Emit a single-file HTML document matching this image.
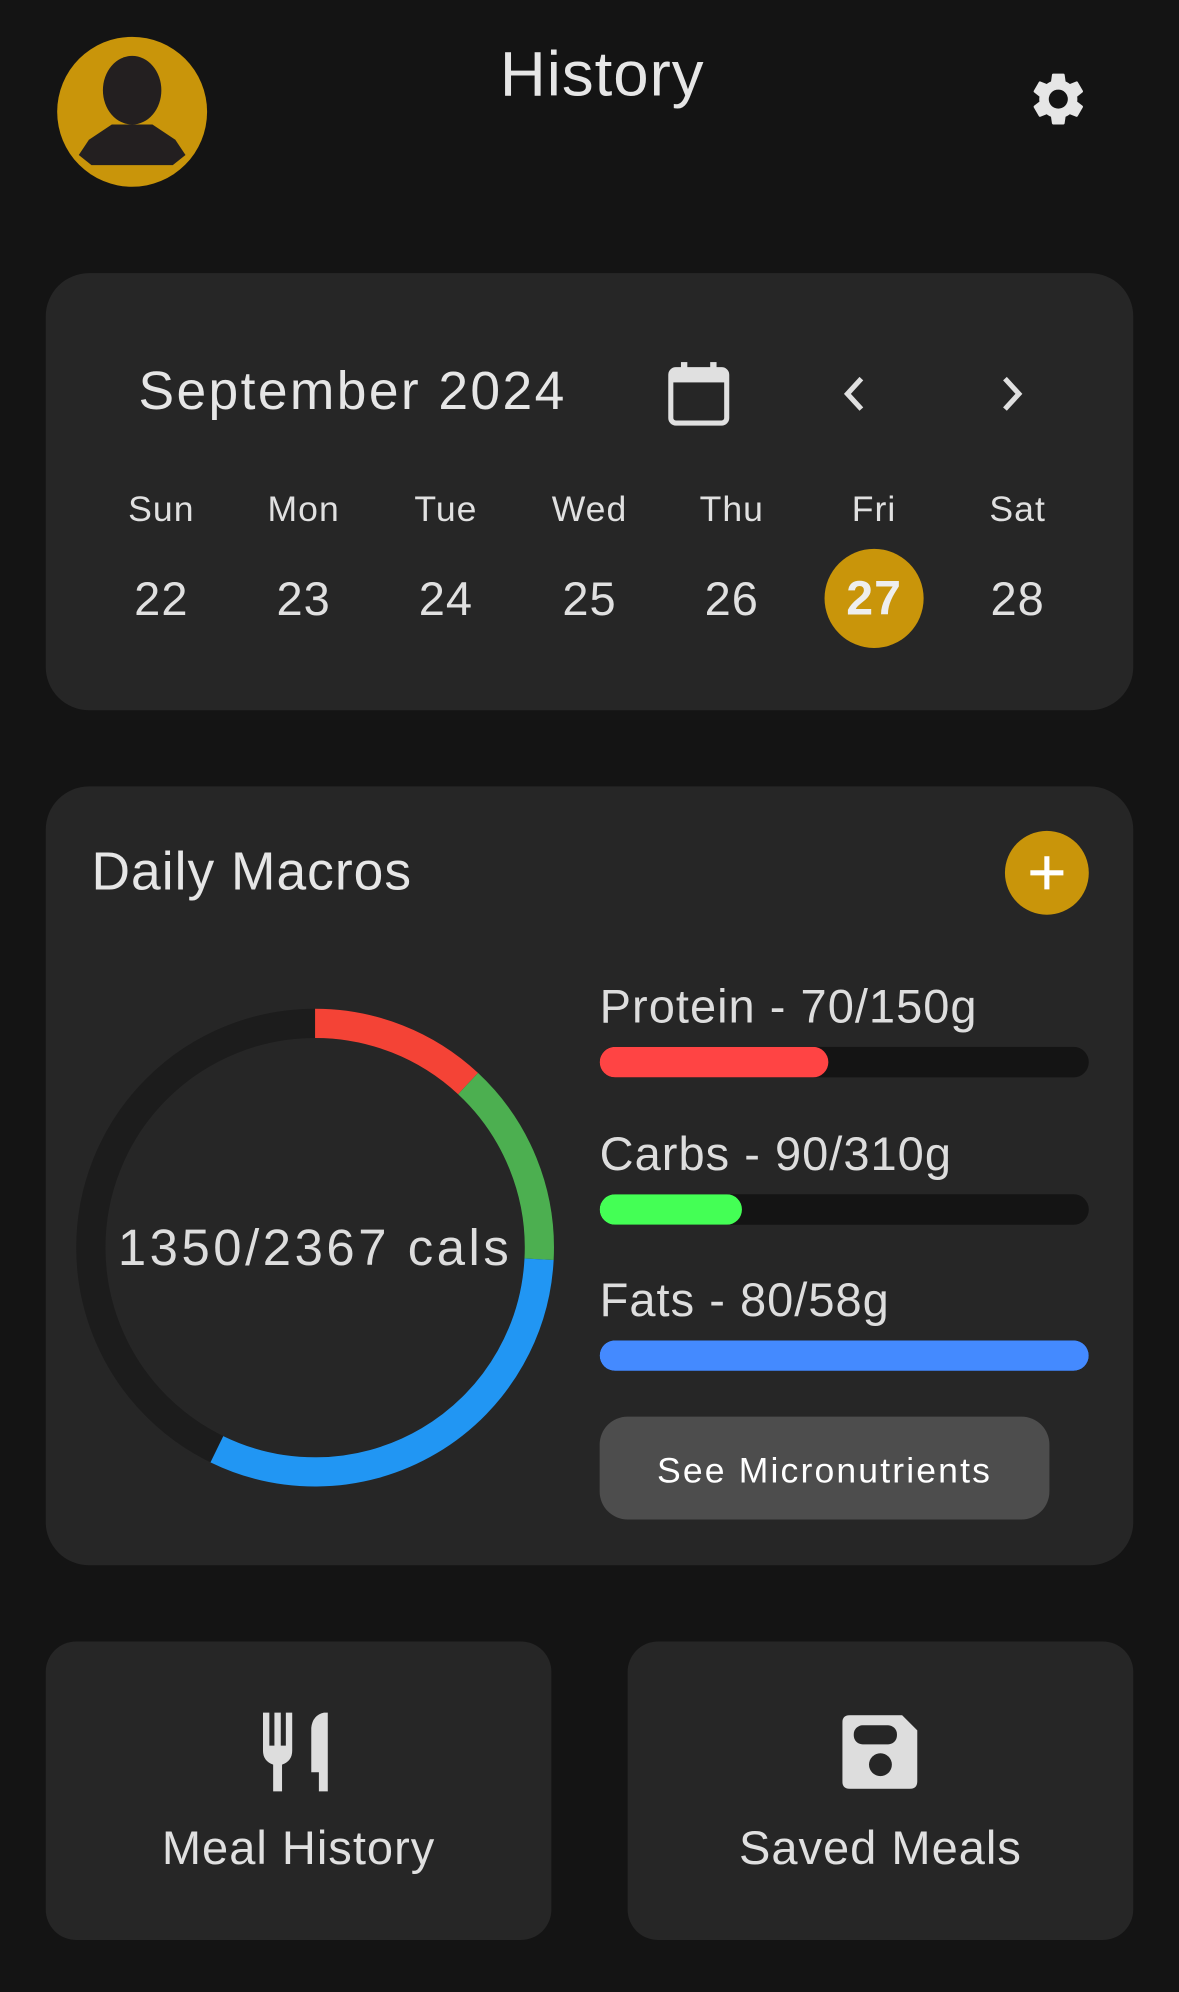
<!DOCTYPE html>
<html><head><meta charset="utf-8"><style>
html,body{margin:0;padding:0;background:#141414;width:1179px;height:1992px;overflow:hidden}
#w{position:absolute;left:0;top:0;width:928px;height:1568px;transform:scale(1.27047);transform-origin:0 0;font-family:"Liberation Sans",sans-serif;color:#e0e0e0;letter-spacing:0.05em}
.a{position:absolute}
.card{position:absolute;background:#262626;border-radius:34px}
.c{position:absolute;transform:translate(-50%,-50%);white-space:nowrap}
.bar{position:absolute;left:472px;width:385px;height:24px;border-radius:12px;background:#141414;overflow:hidden}
.bar div{height:100%;border-radius:12px}
.lbl{position:absolute;left:472px;font-size:37px;color:#ddd;white-space:nowrap}
</style></head><body><div id="w">
<svg class="a" style="left:44px;top:28px" width="120" height="120" viewBox="0 0 120 120">
<circle cx="60" cy="60" r="59" fill="#c9950a"/>
<ellipse cx="60" cy="43" rx="23" ry="27" fill="#231f20"/>
<path d="M44 70 L76 70 L94 82 L102 94 L92 102 L28 102 L18 94 L26 82 Z" fill="#231f20"/>
</svg>
<div class="c" style="left:474px;top:58px;font-size:50px;color:#e6e6e6">History</div>
<svg class="a" style="left:808px;top:53px" width="50" height="50" viewBox="0 0 24 24"><path fill="#e6e6e6" d="M19.14 12.94c.04-.3.06-.61.06-.94s-.02-.64-.07-.94l2.030-1.58a.49.49 0 0 0 .12-.61l-1.920-3.320a.49.49 0 0 0-.59-.22l-2.390.96c-.5-.38-1.030-.7-1.620-.94l-.36-2.540a.48.48 0 0 0-.48-.41h-3.840c-.24 0-.43.17-.47.41l-.36 2.540c-.59.24-1.130.57-1.620.94l-2.390-.96a.48.48 0 0 0-.59.22L2.740 8.870c-.12.21-.08.47.12.61l2.030 1.580c-.05.3-.09.63-.09.94s.02.64.07.94l-2.030 1.580a.49.49 0 0 0-.12.61l1.920 3.320c.12.22.37.29.59.22l2.390-.96c.5.38 1.030.7 1.620.94l.36 2.540c.05.24.24.41.48.41h3.840c.24 0 .44-.17.47-.41l.36-2.540c.59-.24 1.130-.56 1.620-.94l2.390.96c.22.08.47 0 .59-.22l1.920-3.320c.12-.22.07-.47-.12-.61l-2.010-1.580zM12 15.6A3.6 3.6 0 1 1 12 8.4a3.6 3.6 0 0 1 0 7.2z"/></svg>

<div class="card" style="left:36px;top:215px;width:856px;height:344px"></div>
<div class="a" style="left:109px;top:284px;font-size:42px;color:#e6e6e6;letter-spacing:0.045em">September 2024</div>
<svg class="a" style="left:524px;top:283px" width="52" height="54" viewBox="0 0 52 54"><rect x="4" y="8" width="44" height="42" rx="4" fill="none" stroke="#e0e0e0" stroke-width="4"/><rect x="4" y="8" width="44" height="10" fill="#e0e0e0"/><rect x="12" y="2" width="5" height="10" fill="#e0e0e0"/><rect x="35" y="2" width="5" height="10" fill="#e0e0e0"/></svg>
<svg class="a" style="left:660px;top:294px" width="26" height="32" viewBox="0 0 26 32"><path d="M18 4 L7 16 L18 28" fill="none" stroke="#e0e0e0" stroke-width="4"/></svg>
<svg class="a" style="left:783px;top:294px" width="26" height="32" viewBox="0 0 26 32"><path d="M8 4 L19 16 L8 28" fill="none" stroke="#e0e0e0" stroke-width="4"/></svg>
<div class="c" style="left:127px;top:401px;font-size:28px">Sun</div>
<div class="c" style="left:239px;top:401px;font-size:28px">Mon</div>
<div class="c" style="left:351px;top:401px;font-size:28px">Tue</div>
<div class="c" style="left:464px;top:401px;font-size:28px">Wed</div>
<div class="c" style="left:576px;top:401px;font-size:28px">Thu</div>
<div class="c" style="left:688px;top:401px;font-size:28px">Fri</div>
<div class="c" style="left:801px;top:401px;font-size:28px">Sat</div>
<div class="a" style="left:649px;top:432px;width:78px;height:78px;border-radius:50%;background:#c9950a"></div>
<div class="c" style="left:127px;top:472px;font-size:37px">22</div>
<div class="c" style="left:239px;top:472px;font-size:37px">23</div>
<div class="c" style="left:351px;top:472px;font-size:37px">24</div>
<div class="c" style="left:464px;top:472px;font-size:37px">25</div>
<div class="c" style="left:576px;top:472px;font-size:37px">26</div>
<div class="c" style="left:688px;top:472px;font-size:38px;font-weight:bold;color:#eee">27</div>
<div class="c" style="left:801px;top:472px;font-size:37px">28</div>

<div class="card" style="left:36px;top:619px;width:856px;height:613px"></div>
<div class="a" style="left:72px;top:662px;font-size:42px;color:#e6e6e6">Daily Macros</div>
<div class="a" style="left:791px;top:654px;width:66px;height:66px;border-radius:50%;background:#c9950a"></div>
<svg class="a" style="left:808px;top:671px" width="32" height="32"><path d="M16 3V29M3 16H29" stroke="#fff" stroke-width="4"/></svg>
<svg class="a" style="left:0;top:0" width="928" height="1568">
<circle cx="248" cy="982" r="176.5" fill="none" stroke="#1c1c1c" stroke-width="23"/>
<path d="M248 805.5 A176.5 176.5 0 0 1 368.4 852.9" fill="none" stroke="#f44336" stroke-width="23"/>
<path d="M368.4 852.9 A176.5 176.5 0 0 1 424.3 991.2" fill="none" stroke="#4caf50" stroke-width="23"/>
<path d="M424.3 991.2 A176.5 176.5 0 0 1 170.7 1140.7" fill="none" stroke="#2196f3" stroke-width="23"/>
</svg>
<div class="c" style="left:248px;top:983px;font-size:40px;color:#ddd;letter-spacing:0.07em">1350/2367 cals</div>
<div class="lbl" style="top:772px">Protein - 70/150g</div>
<div class="bar" style="top:824px"><div style="width:180px;background:#ff4444"></div></div>
<div class="lbl" style="top:888px">Carbs - 90/310g</div>
<div class="bar" style="top:940px"><div style="width:112px;background:#44ff55"></div></div>
<div class="lbl" style="top:1003px">Fats - 80/58g</div>
<div class="bar" style="top:1055px"><div style="width:385px;background:#448aff"></div></div>
<div class="a" style="left:472px;top:1115px;width:354px;height:81px;border-radius:22px;background:#4d4d4d"></div>
<div class="c" style="left:649px;top:1158px;font-size:28px;color:#fff;letter-spacing:0.06em">See Micronutrients</div>

<div class="card" style="left:36px;top:1292px;width:398px;height:235px;border-radius:24px"></div>
<div class="card" style="left:494px;top:1292px;width:398px;height:235px;border-radius:24px"></div>
<svg class="a" style="left:205px;top:1346px" width="62" height="66" viewBox="0 0 62 66"><path fill="#ddd" d="M2 2H7V28H11V2H16V28H20V2H25V32Q25 40 17 43V64H10V43Q2 40 2 32Z"/><path fill="#ddd" d="M50 2Q41 4 40 14V49H46V64H53V2Z"/></svg>
<svg class="a" style="left:663px;top:1350px" width="60" height="58" viewBox="0 0 60 58"><path fill="#ddd" d="M6 0H47L59 12V52Q59 58 53 58H6Q0 58 0 52V6Q0 0 6 0Z"/><rect x="9" y="8" width="34" height="15" rx="7" fill="#262626"/><circle cx="30" cy="39" r="9" fill="#262626"/></svg>
<div class="c" style="left:235px;top:1455px;font-size:37px">Meal History</div>
<div class="c" style="left:693px;top:1455px;font-size:37px">Saved Meals</div>
</div></body></html>
